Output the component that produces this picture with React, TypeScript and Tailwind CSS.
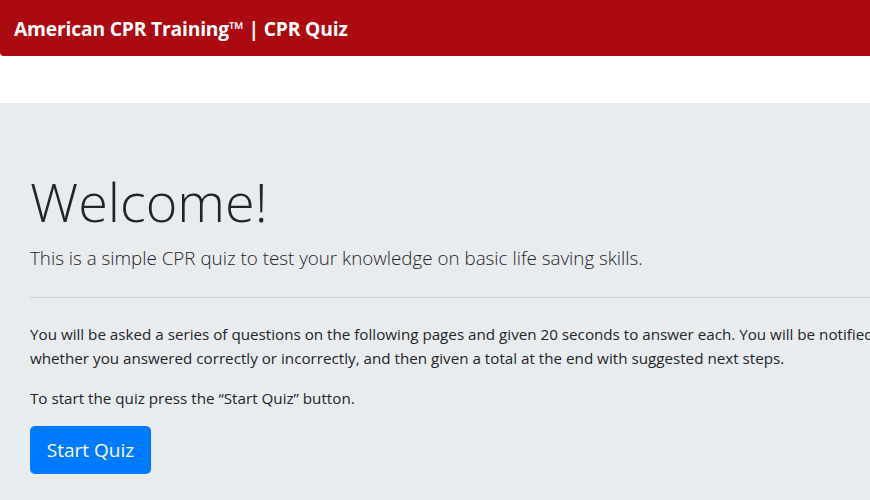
import React from "react";

// Quiz landing page - red brand header, white spacer, jumbotron intro
const App: React.FC = () => {
  return (
    <div className="w-[870px] h-[500px] overflow-hidden bg-white font-['Open_Sans',sans-serif] text-[#212529]">
      {/* Brand header bar */}
      <header className="h-[56px] bg-[#ab0a10] flex items-center pt-[3px] px-[14px] rounded-bl-[4px] shadow-[0_1px_3px_rgba(0,0,0,0.15)]">
        <h1 className="text-[19.3px] font-bold text-white tracking-[-0.2px] whitespace-nowrap">
          American CPR Training™ | CPR Quiz
        </h1>
      </header>

      {/* Empty strip below the header */}
      <div className="h-[47px] bg-white"></div>

      {/* Jumbotron - wider than the viewport, so the text runs off the right edge */}
      <section className="bg-[#e9ecef] w-[1000px] px-[30px] pt-16 pb-16">
        <h2 className="text-[54px] font-light leading-[67px] mb-2 pt-[1px]">Welcome!</h2>
        <p className="text-[18.8px] font-light leading-[30px]">
          This is a simple CPR quiz to test your knowledge on basic life saving skills.
        </p>
        <hr className="my-6 border-0 border-t border-[rgba(0,0,0,0.1)]" />
        <p className="text-[15.2px] leading-6 mb-4 w-[860px]">
          You will be asked a series of questions on the following pages and given 20 seconds to
          answer each. You will be notified whether you answered correctly or incorrectly, and then
          given a total at the end with suggested next steps.
        </p>
        <p className="text-[15.2px] leading-6 mb-4">To start the quiz press the “Start Quiz” button.</p>
        <button className="h-[48px] w-[121px] rounded-[5px] bg-[#007bff] text-white text-[19px] leading-[30px]">
          Start Quiz
        </button>
      </section>
    </div>
  );
};

export default App;
